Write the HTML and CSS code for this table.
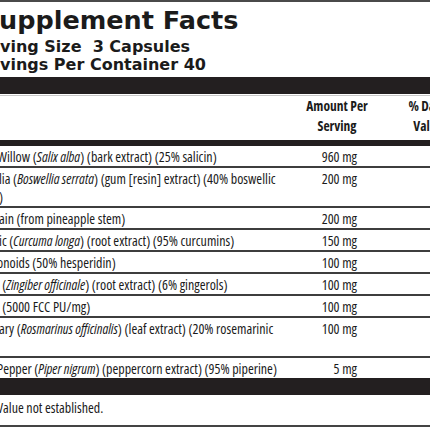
FILE: index.html
```html
<!DOCTYPE html>
<html lang="en">
<head>
    <meta charset="UTF-8">
    <meta name="viewport" content="width=device-width, initial-scale=1.0">
    <title>Supplement Facts</title>
    <link rel="stylesheet" href="styles.css">
</head>
<body>

    <div class="label">
        <h1 class="title">upplement Facts</h1>
        <p class="serving">ving Size&nbsp; 3 Capsules</p>
        <p class="serving last">vings Per Container 40</p>

        <div class="bar thick"></div>

        <div class="row head">
            <div class="name"></div>
            <div class="amount">Amount Per<br>Serving</div>
            <div class="dv">% Daily<br>Value</div>
        </div>

        <div class="bar mid"></div>

        <div class="row">
            <div class="name cut">Willow (<i>Salix alba</i>) (bark extract) (25% salicin)</div>
            <div class="amount">960 mg</div>
            <div class="dv"></div>
        </div>
        <div class="row">
            <div class="name">lia (<i>Boswellia serrata</i>) (gum [resin] extract) (40% boswellic<br>)</div>
            <div class="amount">200 mg</div>
            <div class="dv"></div>
        </div>
        <div class="row">
            <div class="name">ain (from pineapple stem)</div>
            <div class="amount">200 mg</div>
            <div class="dv"></div>
        </div>
        <div class="row">
            <div class="name">ic (<i>Curcuma longa</i>) (root extract) (95% curcumins)</div>
            <div class="amount">150 mg</div>
            <div class="dv"></div>
        </div>
        <div class="row">
            <div class="name cut">onoids (50% hesperidin)</div>
            <div class="amount">100 mg</div>
            <div class="dv"></div>
        </div>
        <div class="row">
            <div class="name cut">&nbsp; (<i>Zingiber officinale</i>) (root extract) (6% gingerols)</div>
            <div class="amount">100 mg</div>
            <div class="dv"></div>
        </div>
        <div class="row">
            <div class="name cut">&nbsp; (5000 FCC PU/mg)</div>
            <div class="amount">100 mg</div>
            <div class="dv"></div>
        </div>
        <div class="row">
            <div class="name">ary (<i>Rosmarinus officinalis</i>) (leaf extract) (20% rosemarinic<br>&nbsp;</div>
            <div class="amount">100 mg</div>
            <div class="dv"></div>
        </div>
        <div class="row last">
            <div class="name cut">Pepper (<i>Piper nigrum</i>) (peppercorn extract) (95% piperine)</div>
            <div class="amount">5 mg</div>
            <div class="dv"></div>
        </div>

        <div class="bar thick"></div>

        <p class="note">Value not established.</p>
    </div>

</body>
</html>
```

FILE: styles.css
```css
html, body {
    overflow: hidden;
}
body {
    margin: 0;
    background: white;
    color: #1b1b1b;
    font-family: "Open Sans", sans-serif;
    font-stretch: 75%;
}
.label {
    width: 482px;
    border-top: 2px solid #4a4a4a;
}
.title {
    margin: 3px 0 3px -1px;
    font-family: "DejaVu Sans", sans-serif;
    font-stretch: normal;
    font-size: 25.5px;
    line-height: 30px;
    font-weight: bold;
}
.serving {
    margin: 0;
    font-family: "DejaVu Sans", sans-serif;
    font-stretch: normal;
    font-size: 16px;
    line-height: 18px;
    font-weight: bold;
}
.serving.last {
    margin-bottom: 3px;
}
.bar {
    background: #231f20;
}
.bar.thick {
    height: 17px;
}
.bar.mid {
    height: 6px;
}
.row {
    display: grid;
    grid-template-columns: 300px 74px 108px;
    padding-top: 2px;
    font-size: 14px;
    line-height: 18px;
    white-space: nowrap;
    border-bottom: 2px solid #3d3d3d;
}
.row.last {
    border-bottom: none;
}
.row .name {
    margin-left: -1px;
}
.row .name.cut {
    margin-left: -3px;
}
.row .amount {
    text-align: right;
    padding-right: 17px;
}
.row.head {
    margin-top: 1px;
    border-top: 1px solid #c8c8c8;
    border-bottom: none;
    padding: 0 0 4px;
    font-size: 13.5px;
    line-height: 20px;
    font-weight: bold;
}
.row.head .amount,
.row.head .dv {
    text-align: center;
    padding-right: 0;
}
.note {
    margin: 0;
    padding: 4px 0 8px;
    font-size: 14px;
    line-height: 18px;
    text-indent: -3px;
    border-bottom: 2px solid #444;
}
```
